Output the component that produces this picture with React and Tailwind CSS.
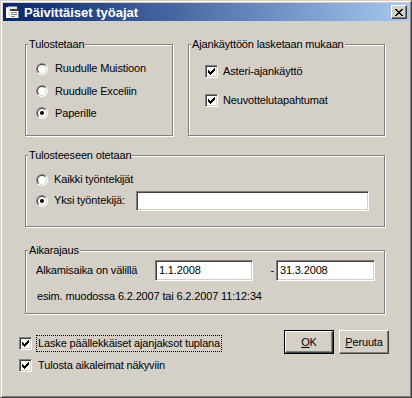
import React from "react";

function Radio({ checked }) {
  return (
    <svg width="12" height="12" viewBox="0 0 12 12" className="shrink-0 block">
      <circle cx="6" cy="6" r="6" fill="#ffffff" />
      <path d="M1.757 10.243 A6 6 0 0 1 10.243 1.757 Z" fill="#808080" />
      <circle cx="6" cy="6" r="5" fill="#D4D0C8" />
      <path d="M2.464 9.536 A5 5 0 0 1 9.536 2.464 Z" fill="#404040" />
      <circle cx="6" cy="6" r="4" fill="#ffffff" />
      {checked && <circle cx="6" cy="6" r="2" fill="#000000" />}
    </svg>
  );
}

function Check({ checked = true }) {
  const px = [
    [6, 0],
    [5, 1], [6, 1],
    [0, 2], [4, 2], [5, 2], [6, 2],
    [0, 3], [1, 3], [3, 3], [4, 3], [5, 3],
    [0, 4], [1, 4], [2, 4], [3, 4], [4, 4],
    [1, 5], [2, 5], [3, 5],
    [2, 6],
  ];
  return (
    <div className="w-[13px] h-[13px] shrink-0 bg-white border border-t-[#808080] border-l-[#808080] border-b-white border-r-white shadow-[inset_1px_1px_0_#404040,inset_-1px_-1px_0_#D4D0C8] relative">
      {checked && (
        <svg width="7" height="7" viewBox="0 0 7 7" className="absolute left-[2px] top-[2px]" shapeRendering="crispEdges">
          {px.map(([x, y]) => (
            <rect key={x + "-" + y} x={x} y={y} width="1" height="1" fill="#000" />
          ))}
        </svg>
      )}
    </div>
  );
}

function Group({ title, className, children }) {
  return (
    <div className={"relative border border-[#808080] shadow-[inset_1px_1px_0_#ffffff,1px_1px_0_#ffffff] " + className}>
      <span className="absolute left-[2px] top-[-8px] bg-[#D4D0C8] px-[1px] leading-[14px] whitespace-nowrap">
        {title}
      </span>
      {children}
    </div>
  );
}

function TextBox({ className, value }) {
  return (
    <div className={"bg-white border border-t-[#808080] border-l-[#808080] border-b-white border-r-white shadow-[inset_1px_1px_0_#404040,inset_-1px_-1px_0_#D4D0C8] flex items-center pl-[3px] " + className}>
      {value}
    </div>
  );
}

function Button({ children, isDefault }) {
  if (isDefault) {
    return (
      <div className="w-[50px] h-[24px] border border-black">
        <div className="w-full h-full bg-[#D4D0C8] border border-t-white border-l-white border-b-[#404040] border-r-[#404040] shadow-[inset_-1px_-1px_0_#808080] flex items-center justify-center">
          {children}
        </div>
      </div>
    );
  }
  return (
    <div className="w-[50px] h-[24px] bg-[#D4D0C8] border border-t-white border-l-white border-b-[#404040] border-r-[#404040] shadow-[inset_-1px_-1px_0_#808080] flex items-center justify-center">
      {children}
    </div>
  );
}

export default function App() {
  return (
    <div className="w-[412px] h-[398px] bg-[#D4D0C8] text-black text-[11px] leading-[13px] tracking-[-0.15px] font-['Liberation_Sans',Arial,sans-serif] border border-t-[#D4D0C8] border-l-[#D4D0C8] border-b-[#404040] border-r-[#404040] shadow-[inset_1px_1px_0_#ffffff,inset_-1px_-1px_0_#808080] p-[2px] flex flex-col overflow-hidden">
      {/* Title bar */}
      <div className="h-[18px] shrink-0 bg-linear-to-r from-[#0A246A] to-[#A6CAF0] flex items-center pl-[2px] pr-[2px]">
        <svg width="16" height="16" viewBox="0 0 16 16" className="shrink-0" shapeRendering="crispEdges">
          <rect x="1" y="3" width="9" height="11" fill="#ffffff" />
          <rect x="1" y="3" width="9" height="1" fill="#C0C0C0" />
          <rect x="3" y="2" width="9" height="10" fill="#E8E8E8" />
          <rect x="3" y="2" width="9" height="1" fill="#808080" />
          <rect x="5" y="5" width="9" height="9" fill="#ffffff" />
          <rect x="5" y="5" width="9" height="2" fill="#404040" />
          <rect x="6" y="8" width="6" height="1" fill="#808080" />
          <rect x="6" y="10" width="6" height="1" fill="#808080" />
          <rect x="6" y="12" width="4" height="1" fill="#808080" />
          <rect x="13" y="7" width="1" height="7" fill="#808080" />
        </svg>
        <span className="ml-[3px] text-white font-bold text-[13px] leading-[15px] tracking-normal">Päivittäiset työajat</span>
        <div className="ml-auto w-[16px] h-[14px] bg-[#D4D0C8] border border-t-white border-l-white border-b-[#404040] border-r-[#404040] shadow-[inset_-1px_-1px_0_#808080] flex items-center justify-center">
          <svg width="8" height="7" viewBox="0 0 8 7" shapeRendering="crispEdges">
            <path d="M0 0h2v1h1v1h2v-1h1v-1h2v1h-1v1h-1v1h-1v1h1v1h1v1h1v1h-2v-1h-1v-1h-2v1h-1v1h-2v-1h1v-1h1v-1h1v-1h-1v-1h-1v-1h-1z" fill="#000" />
          </svg>
        </div>
      </div>

      {/* Content */}
      <div className="flex flex-col pl-[22px]">
        <div className="flex gap-[15px] mt-[23px]">
          <Group title="Tulostetaan" className="w-[148px] h-[92px] pt-[12px] pl-[10px]">
            <div className="h-[23px] flex items-center gap-[7px]"><Radio /><span>Ruudulle Muistioon</span></div>
            <div className="h-[22px] flex items-center gap-[7px]"><Radio /><span>Ruudulle Exceliin</span></div>
            <div className="h-[22px] flex items-center gap-[7px]"><Radio checked /><span>Paperille</span></div>
          </Group>
          <Group title="Ajankäyttöön lasketaan mukaan" className="w-[197px] h-[92px] pt-[20px] pl-[16px] flex flex-col gap-[16px]">
            <div className="h-[13px] flex items-center gap-[5px]"><Check /><span>Asteri-ajankäyttö</span></div>
            <div className="h-[13px] flex items-center gap-[5px]"><Check /><span>Neuvottelutapahtumat</span></div>
          </Group>
        </div>

        <Group title="Tulosteeseen otetaan" className="w-[360px] h-[72px] mt-[19px] pt-[13px] pl-[10px]">
          <div className="h-[21px] flex items-center gap-[6px]"><Radio /><span>Kaikki työntekijät</span></div>
          <div className="h-[21px] flex items-center">
            <Radio checked />
            <span className="ml-[6px] w-[82px]">Yksi työntekijä:</span>
            <TextBox className="w-[233px] h-[20px]" value="" />
          </div>
        </Group>

        <Group title="Aikarajaus" className="w-[360px] h-[64px] mt-[23px] pt-[9px] pl-[10px]">
          <div className="h-[21px] flex items-center">
            <span className="w-[119px]">Alkamisaika on välillä</span>
            <TextBox className="w-[98px] h-[21px]" value="1.1.2008" />
            <span className="w-[23px] text-right pr-[2px]">-</span>
            <TextBox className="w-[99px] h-[21px]" value="31.3.2008" />
          </div>
          <div className="mt-[9px] pl-[1px] leading-[13px]">esim. muodossa 6.2.2007 tai 6.2.2007 11:12:34</div>
        </Group>

        <div className="flex mt-[16px] -ml-[6px] pr-[20px]">
          <div className="flex flex-col pt-[5px] gap-[5px]">
            <div className="flex items-center gap-[4px]">
              <Check />
              <span className="border border-dotted border-black px-[1px] h-[17px] flex items-center">Laske päällekkäiset ajanjaksot tuplana</span>
            </div>
            <div className="flex items-center gap-[4px]">
              <Check />
              <span className="border border-transparent px-[1px] h-[17px] flex items-center">Tulosta aikaleimat näkyviin</span>
            </div>
          </div>
          <div className="ml-auto flex gap-[5px] items-start">
            <Button isDefault><span><u>O</u>K</span></Button>
            <Button><span><u>P</u>eruuta</span></Button>
          </div>
        </div>
      </div>
    </div>
  );
}
